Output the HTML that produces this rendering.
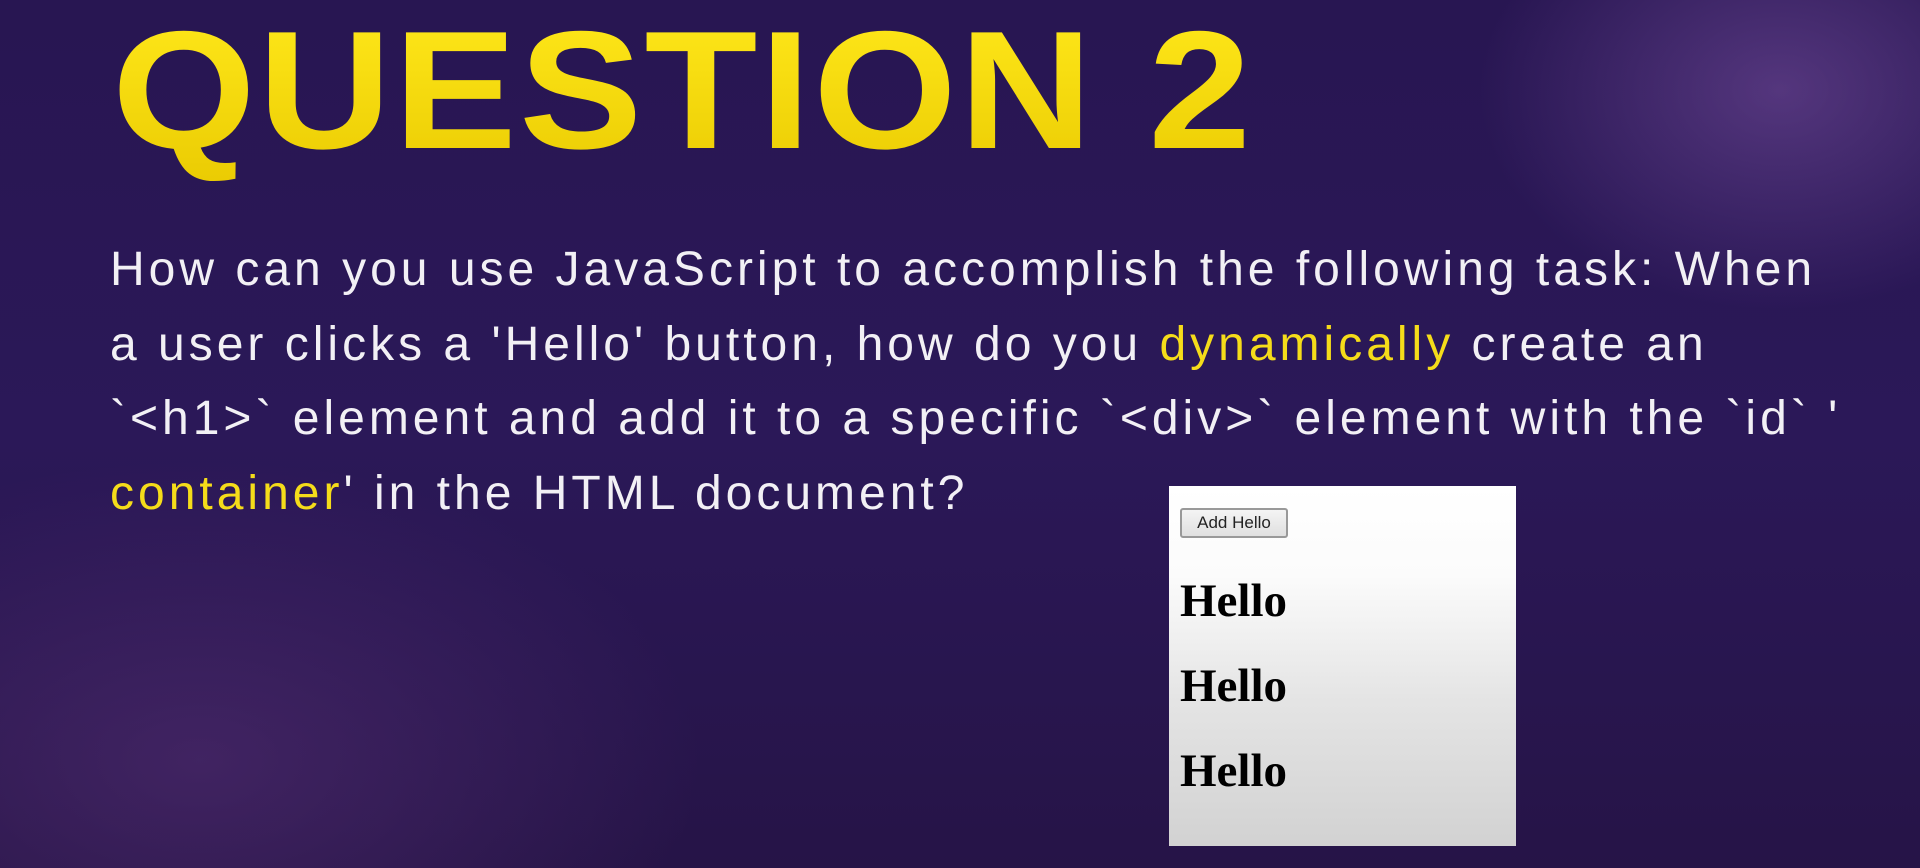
<!DOCTYPE html>
<html><head><meta charset="utf-8"><style>
html,body{margin:0;padding:0}
body{width:1920px;height:868px;overflow:hidden;position:relative;
background:
radial-gradient(ellipse 300px 220px at 1780px 90px, rgba(120,80,160,0.55), rgba(120,80,160,0) 100%),
radial-gradient(ellipse 500px 300px at 200px 760px, rgba(90,50,120,0.5), rgba(90,50,120,0) 100%),
linear-gradient(180deg,#281652 0%,#2b1858 50%,#261447 100%);
font-family:"Liberation Sans",sans-serif;}
.title{position:absolute;left:112px;top:6px;font-weight:bold;font-size:168px;line-height:1;color:#f7d90a;letter-spacing:2px;white-space:nowrap;transform:scaleX(1.1);transform-origin:left top;
background:linear-gradient(180deg,#ffe81a,#e8c800);-webkit-background-clip:text;background-clip:text;-webkit-text-fill-color:transparent;padding-bottom:30px}
.body{position:absolute;left:110px;top:233px;font-size:48px;line-height:74.7px;color:#f2f0f5;white-space:nowrap;letter-spacing:4px}
.y{color:#f5dc1a}
.box{position:absolute;left:1169px;top:486px;width:347px;height:360px;background:linear-gradient(180deg,#ffffff 0%,#fbfbfb 25%,#e4e4e4 60%,#d2d2d2 100%);}
.btn{position:absolute;left:11px;top:22px;width:108px;height:30px;box-sizing:border-box;border:2px solid #999;border-radius:3px;background:linear-gradient(#f4f4f4,#e0e0e0);font-size:17px;line-height:26px;text-align:center;color:#222}
.h{position:absolute;left:11px;font-family:"Liberation Serif",serif;font-weight:bold;font-size:47px;line-height:1;color:#000}
</style></head><body>
<div class="title">QUESTION 2</div>
<div class="body">How can you use JavaScript to accomplish the following task: When<br>a user clicks a 'Hello' button, how do you <span class="y">dynamically</span> create an<br>`&lt;h1&gt;` element and add it to a specific `&lt;div&gt;` element with the `id` '<br><span class="y">container</span>' in the HTML document?</div>
<div class="box">
<div class="btn">Add Hello</div>
<div class="h" style="top:92px">Hello</div>
<div class="h" style="top:177px">Hello</div>
<div class="h" style="top:262px">Hello</div>
</div>
</body></html>
